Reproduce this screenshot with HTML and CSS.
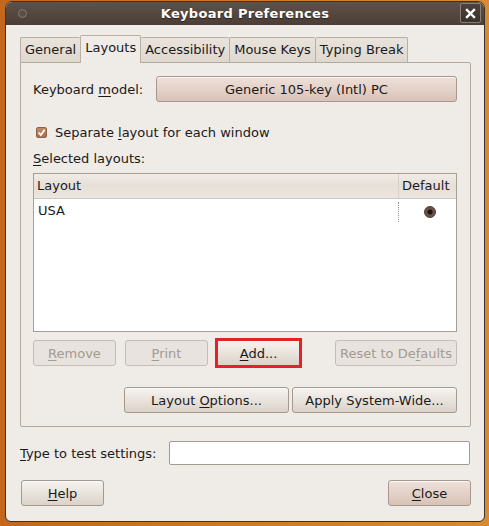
FILE: index.html
```html
<!DOCTYPE html>
<html lang="en">
<head>
    <meta charset="UTF-8">
    <title>Keyboard Preferences</title>
    <link rel="stylesheet" href="styles.css">
</head>
<body>
    <div class="window">
        <div class="titlebar">
            <span class="menu-dot"></span>
            <span class="title">Keyboard Preferences</span>
            <span class="close-x">
                <svg width="11" height="11" viewBox="0 0 11 11"><path d="M2 2 L9 9 M9 2 L2 9" stroke="#fff" stroke-width="2.4" stroke-linecap="square"/></svg>
            </span>
        </div>
        <div class="content">
            <div class="tabs">
                <div class="tab">General</div>
                <div class="tab active">Layouts</div>
                <div class="tab">Accessibility</div>
                <div class="tab">Mouse Keys</div>
                <div class="tab">Typing Break</div>
            </div>
            <div class="panel">
                <div class="row model-row">
                    <span>Keyboard <u>m</u>odel:</span>
                    <button class="btn pink model-btn">Generic 105-key (Intl) PC</button>
                </div>
                <label class="check-row">
                    <span class="checkbox">
                        <svg width="9" height="9" viewBox="0 0 9 9"><path d="M1.5 4.5 L3.8 7 L7.6 1.8" fill="none" stroke="#fff" stroke-width="1.8"/></svg>
                    </span>
                    <span>Separate <u>l</u>ayout for each window</span>
                </label>
                <div class="sel-label"><u>S</u>elected layouts:</div>
                <div class="tree">
                    <div class="tree-head">
                        <div class="col-layout">Layout</div>
                        <div class="col-default">Default</div>
                    </div>
                    <div class="tree-row">
                        <div class="col-layout">USA</div>
                        <div class="col-default"><span class="radio"></span></div>
                    </div>
                </div>
                <div class="row btn-row">
                    <button class="btn off small"><u>R</u>emove</button>
                    <button class="btn off small"><u>P</u>rint</button>
                    <button class="btn small marked"><u>A</u>dd...</button>
                    <button class="btn off reset">Reset to De<u>f</u>aults</button>
                </div>
                <div class="row opt-row">
                    <button class="btn wide">Layout <u>O</u>ptions...</button>
                    <button class="btn wide">Apply System-Wide...</button>
                </div>
            </div>
            <div class="row test-row">
                <span><u>T</u>ype to test settings:</span>
                <input class="test-input" type="text">
            </div>
            <div class="row bottom-row">
                <button class="btn small"><u>H</u>elp</button>
                <button class="btn pink small"><u>C</u>lose</button>
            </div>
        </div>
    </div>
</body>
</html>
```

FILE: styles.css
```css
html, body {
    margin: 0;
    height: 526px;
    overflow: hidden;
}
body {
    background: linear-gradient(90deg, #c4661c, #d07a28 50%, #d88a34);
    padding: 1px 4px 0 5px;
    box-sizing: border-box;
    font-family: "DejaVu Sans", sans-serif;
    font-size: 13px;
    color: #1a1a1a;
}
u {
    text-decoration: underline;
    text-underline-offset: 2px;
}
.window {
    height: 521px;
    box-sizing: border-box;
    border: 1px solid #3c322b;
    border-radius: 7px 7px 6px 6px;
    background: #efebe7;
    overflow: hidden;
}
.titlebar {
    height: 23px;
    background: linear-gradient(#5e5148, #4a3e36);
    position: relative;
    display: flex;
    align-items: center;
    justify-content: center;
}
.menu-dot {
    position: absolute;
    left: 12px;
    top: 7px;
    width: 7px;
    height: 7px;
    border-radius: 50%;
    border: 1px solid #857a72;
    background: #5a4f48;
}
.title {
    color: #fff;
    font-weight: bold;
    font-size: 13px;
    text-shadow: 0 1px 1px #2a221d;
    letter-spacing: 0.3px;
}
.close-x {
    position: absolute;
    right: 3px;
    top: 1px;
    width: 19px;
    height: 18px;
    border: 1px solid #8a7e75;
    border-radius: 2px;
    background: linear-gradient(#4e433b, #3b312b);
    display: flex;
    align-items: center;
    justify-content: center;
}
.content {
    padding: 10px 13px 0 14px;
}
.tabs {
    display: flex;
    align-items: flex-end;
    height: 27px;
}
.tab {
    height: 24px;
    line-height: 24px;
    padding: 0 4px;
    border: 1px solid #b9afa4;
    border-bottom: none;
    border-right: none;
    border-radius: 2px 2px 0 0;
    background: linear-gradient(#e9e3dc, #dfd8cf);
}
.tab:last-child {
    border-right: 1px solid #b9afa4;
}
.tab.active {
    height: 27px;
    line-height: 24px;
    background: #efebe7;
    position: relative;
    z-index: 1;
    margin-bottom: -1px;
    border-right: 1px solid #b9afa4;
}
.tab.active + .tab {
    border-left: none;
}
.panel {
    height: 365px;
    box-sizing: border-box;
    border: 1px solid #b3a99e;
    border-radius: 0 2px 2px 2px;
    padding: 13px 13px 13px 12px;
}
.row {
    display: flex;
    align-items: center;
}
.btn {
    font-family: inherit;
    font-size: 13px;
    color: #1a1a1a;
    height: 26px;
    padding: 0;
    border: 1px solid #a3998e;
    border-radius: 3px;
    background: linear-gradient(#f6f3ef, #e6e0d9 60%, #dbd3ca);
    box-shadow: inset 0 1px 0 #fbfaf8;
}
.btn.pink {
    background: linear-gradient(#ede0d9, #e2cfc5 60%, #d8c1b5);
    border-color: #a8978c;
}
.btn.off {
    color: #a39a90;
    background: #e8e3de;
    border-color: #c6beb4;
    box-shadow: none;
}
.model-btn {
    margin-left: auto;
    width: 301px;
}
.check-row {
    display: flex;
    align-items: center;
    margin-top: 22px;
    padding-left: 3px;
    height: 17px;
}
.checkbox {
    width: 11px;
    height: 11px;
    box-sizing: border-box;
    border: 1px solid #8f6247;
    border-radius: 2px;
    background: linear-gradient(#c28865, #a8704f);
    display: flex;
    align-items: center;
    justify-content: center;
    margin-right: 8px;
}
.sel-label {
    margin-top: 9px;
    height: 17px;
    line-height: 17px;
}
.tree {
    margin-top: 6px;
    height: 159px;
    box-sizing: border-box;
    border: 1px solid #a79e93;
    background: #fff;
}
.tree-head {
    display: flex;
    height: 24px;
    line-height: 24px;
    background: linear-gradient(#f1ece7, #e6dfd7 50%, #ece6e0);
    border-bottom: 1px solid #cfc7be;
}
.tree-row {
    display: flex;
    height: 24px;
    line-height: 24px;
}
.col-layout {
    flex: 1;
    padding-left: 3px;
}
.tree-row .col-layout {
    padding-left: 4px;
}
.col-default {
    width: 58px;
    box-sizing: border-box;
    padding-left: 3px;
}
.tree-head .col-default {
    border-left: 1px solid #d8d0c7;
}
.tree-row .col-default {
    border-left: 1px dotted #9a9189;
    margin-top: 3px;
    height: 20px;
    display: flex;
    justify-content: center;
    align-items: center;
    padding-left: 4px;
}
.radio {
    width: 12px;
    height: 12px;
    border-radius: 50%;
    background: radial-gradient(circle, #1e1410 0 2.2px, #6d5448 3px, #5e473c);
    border: 1px solid #4a3a32;
    box-sizing: border-box;
}
.btn-row {
    margin-top: 8px;
    gap: 9px;
}
.small {
    width: 83px;
}
.reset {
    width: 122px;
    margin-left: auto;
}
.marked {
    border-radius: 0;
    outline: 3px solid #e3202b;
    outline-offset: -1px;
}
.opt-row {
    margin-top: 21px;
    justify-content: flex-end;
    gap: 3px;
}
.wide {
    width: 165px;
}
.test-row {
    margin-top: 14px;
    height: 24px;
}
.test-input {
    margin-left: auto;
    margin-right: 1px;
    width: 301px;
    height: 24px;
    box-sizing: border-box;
    border: 1px solid #a39a90;
    border-radius: 2px;
    background: #fff;
}
.bottom-row {
    margin-top: 15px;
    justify-content: space-between;
    padding-left: 1px;
}
```
